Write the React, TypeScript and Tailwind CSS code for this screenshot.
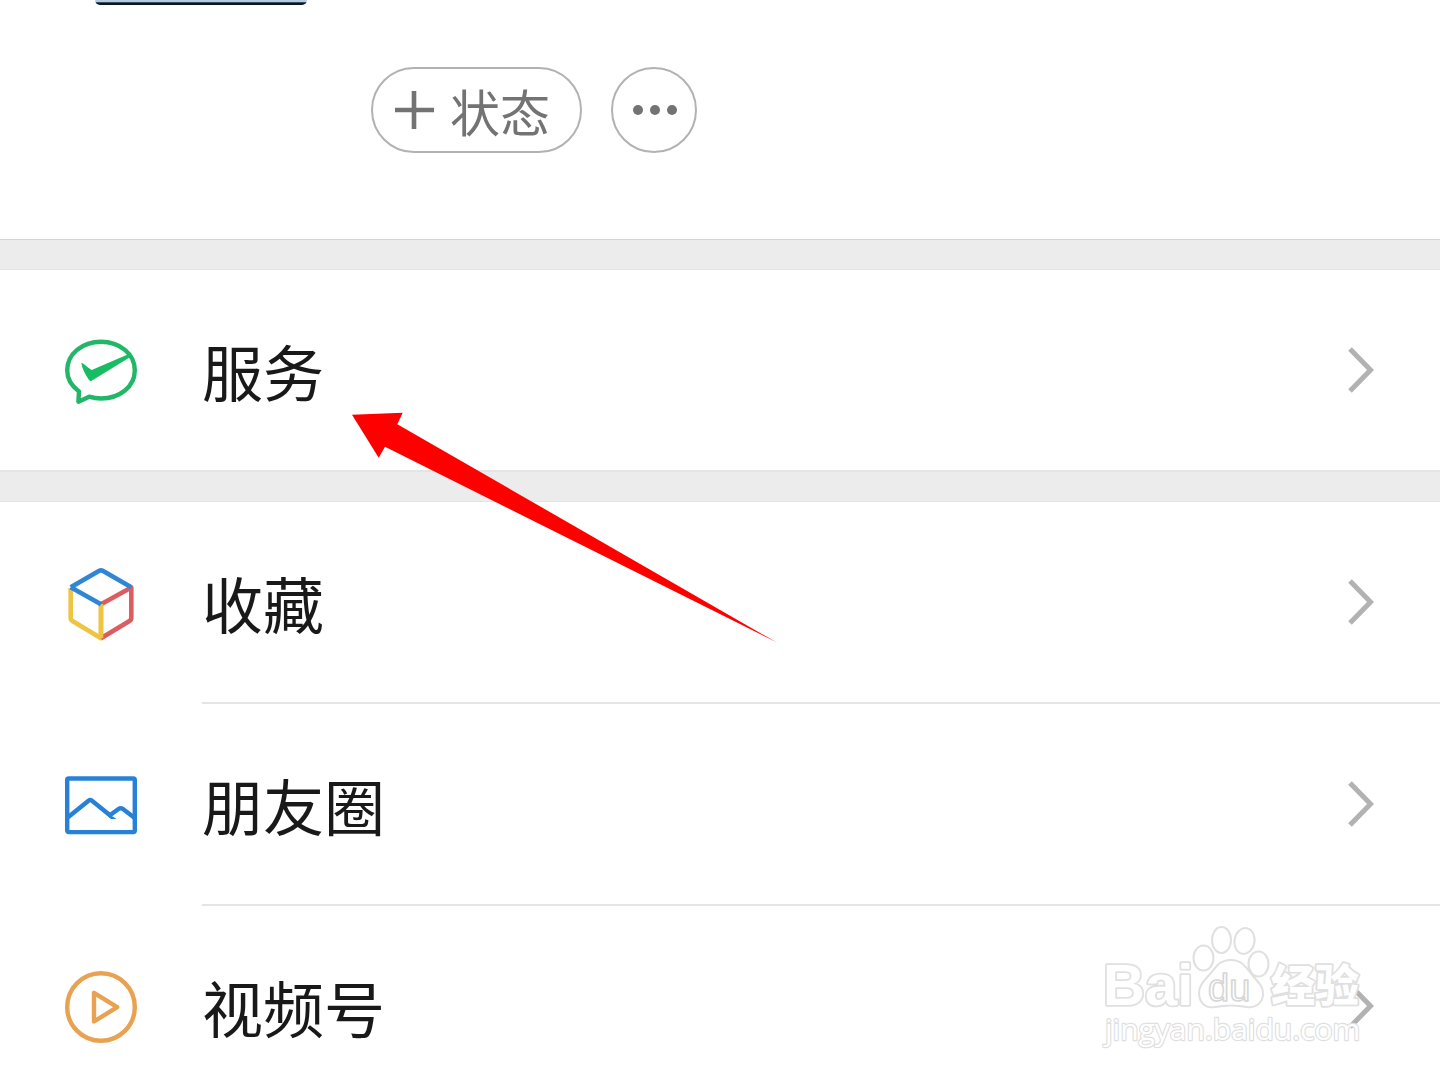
import type { ReactNode } from "react";

type Item = { label: string; href: string; icon: ReactNode };

function ServiceIcon() {
  return (
    <svg className="size-[72px] overflow-visible" viewBox="0 0 72 72" fill="none" aria-hidden="true">
      <path
        d="M14 56.5C6.5 51 2.2 43.5 2.2 35.3C2.2 18.9 17.2 6.7 36 6.7S69.8 18.9 69.8 35.3S54.8 63.5 36 63.5C31.8 63.5 27.8 62.8 24.2 61.7L13.4 66.7Z"
        stroke="#22b668"
        strokeWidth="4.4"
        strokeLinejoin="round"
      />
      <path d="M16.3 28C18 27.5 20 30.5 26.7 35L65 18.6L66.5 21.2L27.5 45.3Q25.7 46.7 24 45C20 39 17 33 16.3 28Z" fill="#17bd62" />
    </svg>
  );
}

function CubeIcon() {
  return (
    <svg
      className="size-[72px] overflow-visible"
      viewBox="0 0 72 72"
      fill="none"
      strokeWidth="4.6"
      strokeLinejoin="round"
      aria-hidden="true"
    >
      <path d="M5.7 21V51Q5.7 53 7.5 54L36 71.2V37" stroke="#efc443" />
      <path d="M36 71.2L64.5 54Q66.3 53 66.3 51V20.5L36 37.3" stroke="#dc5c60" />
      <path d="M36 37V71.2" stroke="#efc443" />
      <path d="M5.7 20.3L34.3 3.8Q36 2.8 37.7 3.8L66.3 20.3M5.7 20.3L36 37.3" stroke="#2f85d6" />
    </svg>
  );
}

function MomentsIcon() {
  return (
    <svg className="size-[72px]" viewBox="0 0 72 72" fill="none" stroke="#2782d7" strokeWidth="4.4" aria-hidden="true">
      <rect x="2.2" y="9.5" width="67.6" height="53.6" rx="1.5" />
      <path d="M3 48.3L23.5 31.7Q25.2 30.3 27 31.7L46.5 47.5" />
      <path d="M45.5 45.8L53.5 40Q55.7 38.4 58 40L70 49.2" />
      <path d="M43 47L49 44L47 47L51.5 50H46Z" fill="#2782d7" stroke="none" />
    </svg>
  );
}

function ChannelsIcon() {
  return (
    <svg
      className="size-[72px]"
      viewBox="0 0 72 72"
      fill="none"
      stroke="#e8a251"
      strokeWidth="4.4"
      strokeLinejoin="round"
      aria-hidden="true"
    >
      <circle cx="36" cy="36" r="33.8" />
      <path d="M29 21.9V50.5L52.2 36.2Z" />
    </svg>
  );
}

function Chevron() {
  return (
    <svg className="h-[46px] w-[26px]" viewBox="0 0 26 46" fill="none" aria-hidden="true">
      <path d="M2 2L22.5 23L2 44" stroke="#b2b2b2" strokeWidth="5" />
    </svg>
  );
}

const services: Item[] = [{ label: "服务", href: "#services", icon: <ServiceIcon /> }];

const library: Item[] = [
  { label: "收藏", href: "#favorites", icon: <CubeIcon /> },
  { label: "朋友圈", href: "#moments", icon: <MomentsIcon /> },
  { label: "视频号", href: "#channels", icon: <ChannelsIcon /> },
];

function MenuList({ items }: { items: Item[] }) {
  return (
    <ul>
      {items.map((item, i) => (
        <li key={item.label}>
          <a href={item.href} className="flex items-stretch gap-[65px] pl-[65px]">
            <span className="flex items-center">{item.icon}</span>
            <span
              className={`flex h-[202px] flex-1 items-center justify-between border-b-2 pr-[66px] ${
                i < items.length - 1 ? "border-[#e5e5e5]" : "border-transparent"
              }`}
            >
              <span className="text-[61px] leading-none">{item.label}</span>
              <Chevron />
            </span>
          </a>
        </li>
      ))}
    </ul>
  );
}

function Watermark() {
  return (
    <svg
      className="absolute right-[68px] bottom-[28px] h-[130px] w-[270px]"
      viewBox="0 0 270 130"
      fill="#fff"
      stroke="#e0e0e0"
      strokeWidth="2"
      strokeLinejoin="round"
      fontFamily="'Liberation Sans', 'Noto Sans CJK SC', sans-serif"
    >
      <text x="1" y="83" fontSize="58" fontWeight="700" strokeWidth="3.6" paintOrder="stroke">Bai</text>
      <ellipse cx="101.5" cy="36" rx="10" ry="12.5" />
      <ellipse cx="119.5" cy="18" rx="9.5" ry="13" />
      <ellipse cx="142.5" cy="19" rx="10" ry="13" transform="rotate(10 142.5 19)" />
      <ellipse cx="156.5" cy="42" rx="10" ry="12.5" />
      <path d="M129 38C141 38 145 47 151 54C158 62 162 66 161 73C160 82 153 86 145 85C135 83 123 83 113 85C103 87 97 80 97 71C97 62 104 57 109 51C115 43 119 38 129 38Z" />
      <text x="106" y="79" fontSize="38" stroke="#d6d6d6" strokeWidth="1.6">du</text>
      <text x="169" y="80" fontSize="44" fontWeight="900" strokeWidth="3.6" paintOrder="stroke">经验</text>
      <text x="3" y="118" fontSize="30" fontFamily="'Open Sans', sans-serif" strokeWidth="2.4" paintOrder="stroke">
        jingyan.baidu.com
      </text>
    </svg>
  );
}

export default function App() {
  return (
    <div className="relative h-screen overflow-hidden bg-white font-['Noto_Sans_CJK_SC',sans-serif] text-[#191919]">
      {/* Profile */}
      <header className="flex h-[239px] items-start gap-16 pl-[95px]">
        <div className="h-[5px] w-[212px] rounded-b-[14px] bg-linear-to-b from-[#b5cde3] from-30% to-[#0b1726] to-60%" />
        <div className="flex gap-[29px] pt-[67px] text-[#737373]">
          <button className="flex h-[86px] items-center gap-4 rounded-full border-2 border-[#b2b2b2] pr-[30px] pl-[21px]">
            <svg className="size-10" viewBox="0 0 40 40" stroke="currentColor" strokeWidth="4.6" aria-hidden="true">
              <path d="M1 20H40M20 1V39" />
            </svg>
            <span className="text-[50px] leading-none">状态</span>
          </button>
          <button
            aria-label="更多"
            className="flex size-[86px] items-center justify-center rounded-full border-2 border-[#b2b2b2]"
          >
            <svg className="h-3 w-11 overflow-visible" viewBox="0 0 44 12" fill="currentColor" aria-hidden="true">
              <circle cx="6" cy="6" r="5" />
              <circle cx="23" cy="6" r="5" />
              <circle cx="40" cy="6" r="5" />
            </svg>
          </button>
        </div>
      </header>

      {/* Menu */}
      <main>
        <div className="h-[31px] border-y border-t-[#d5d5d5] border-b-[#e4e4e4] bg-[#ececec]" />
        <MenuList items={services} />
        <div className="-mt-0.5 h-8 border-t-2 border-b border-t-[#e4e4e4] border-b-[#e4e4e4] bg-[#ececec]" />
        <MenuList items={library} />
      </main>

      {/* Pointer to the services row */}
      <svg className="pointer-events-none absolute top-[412px] left-[352px] h-[232px] w-[426px]" viewBox="352 412 426 232" aria-hidden="true">
        <path d="M352 414.7L402.7 412.8L397.3 424.3L777 642.6L385 446.8L378.7 457.7Z" fill="#fe0000" />
      </svg>

      <Watermark />
    </div>
  );
}
